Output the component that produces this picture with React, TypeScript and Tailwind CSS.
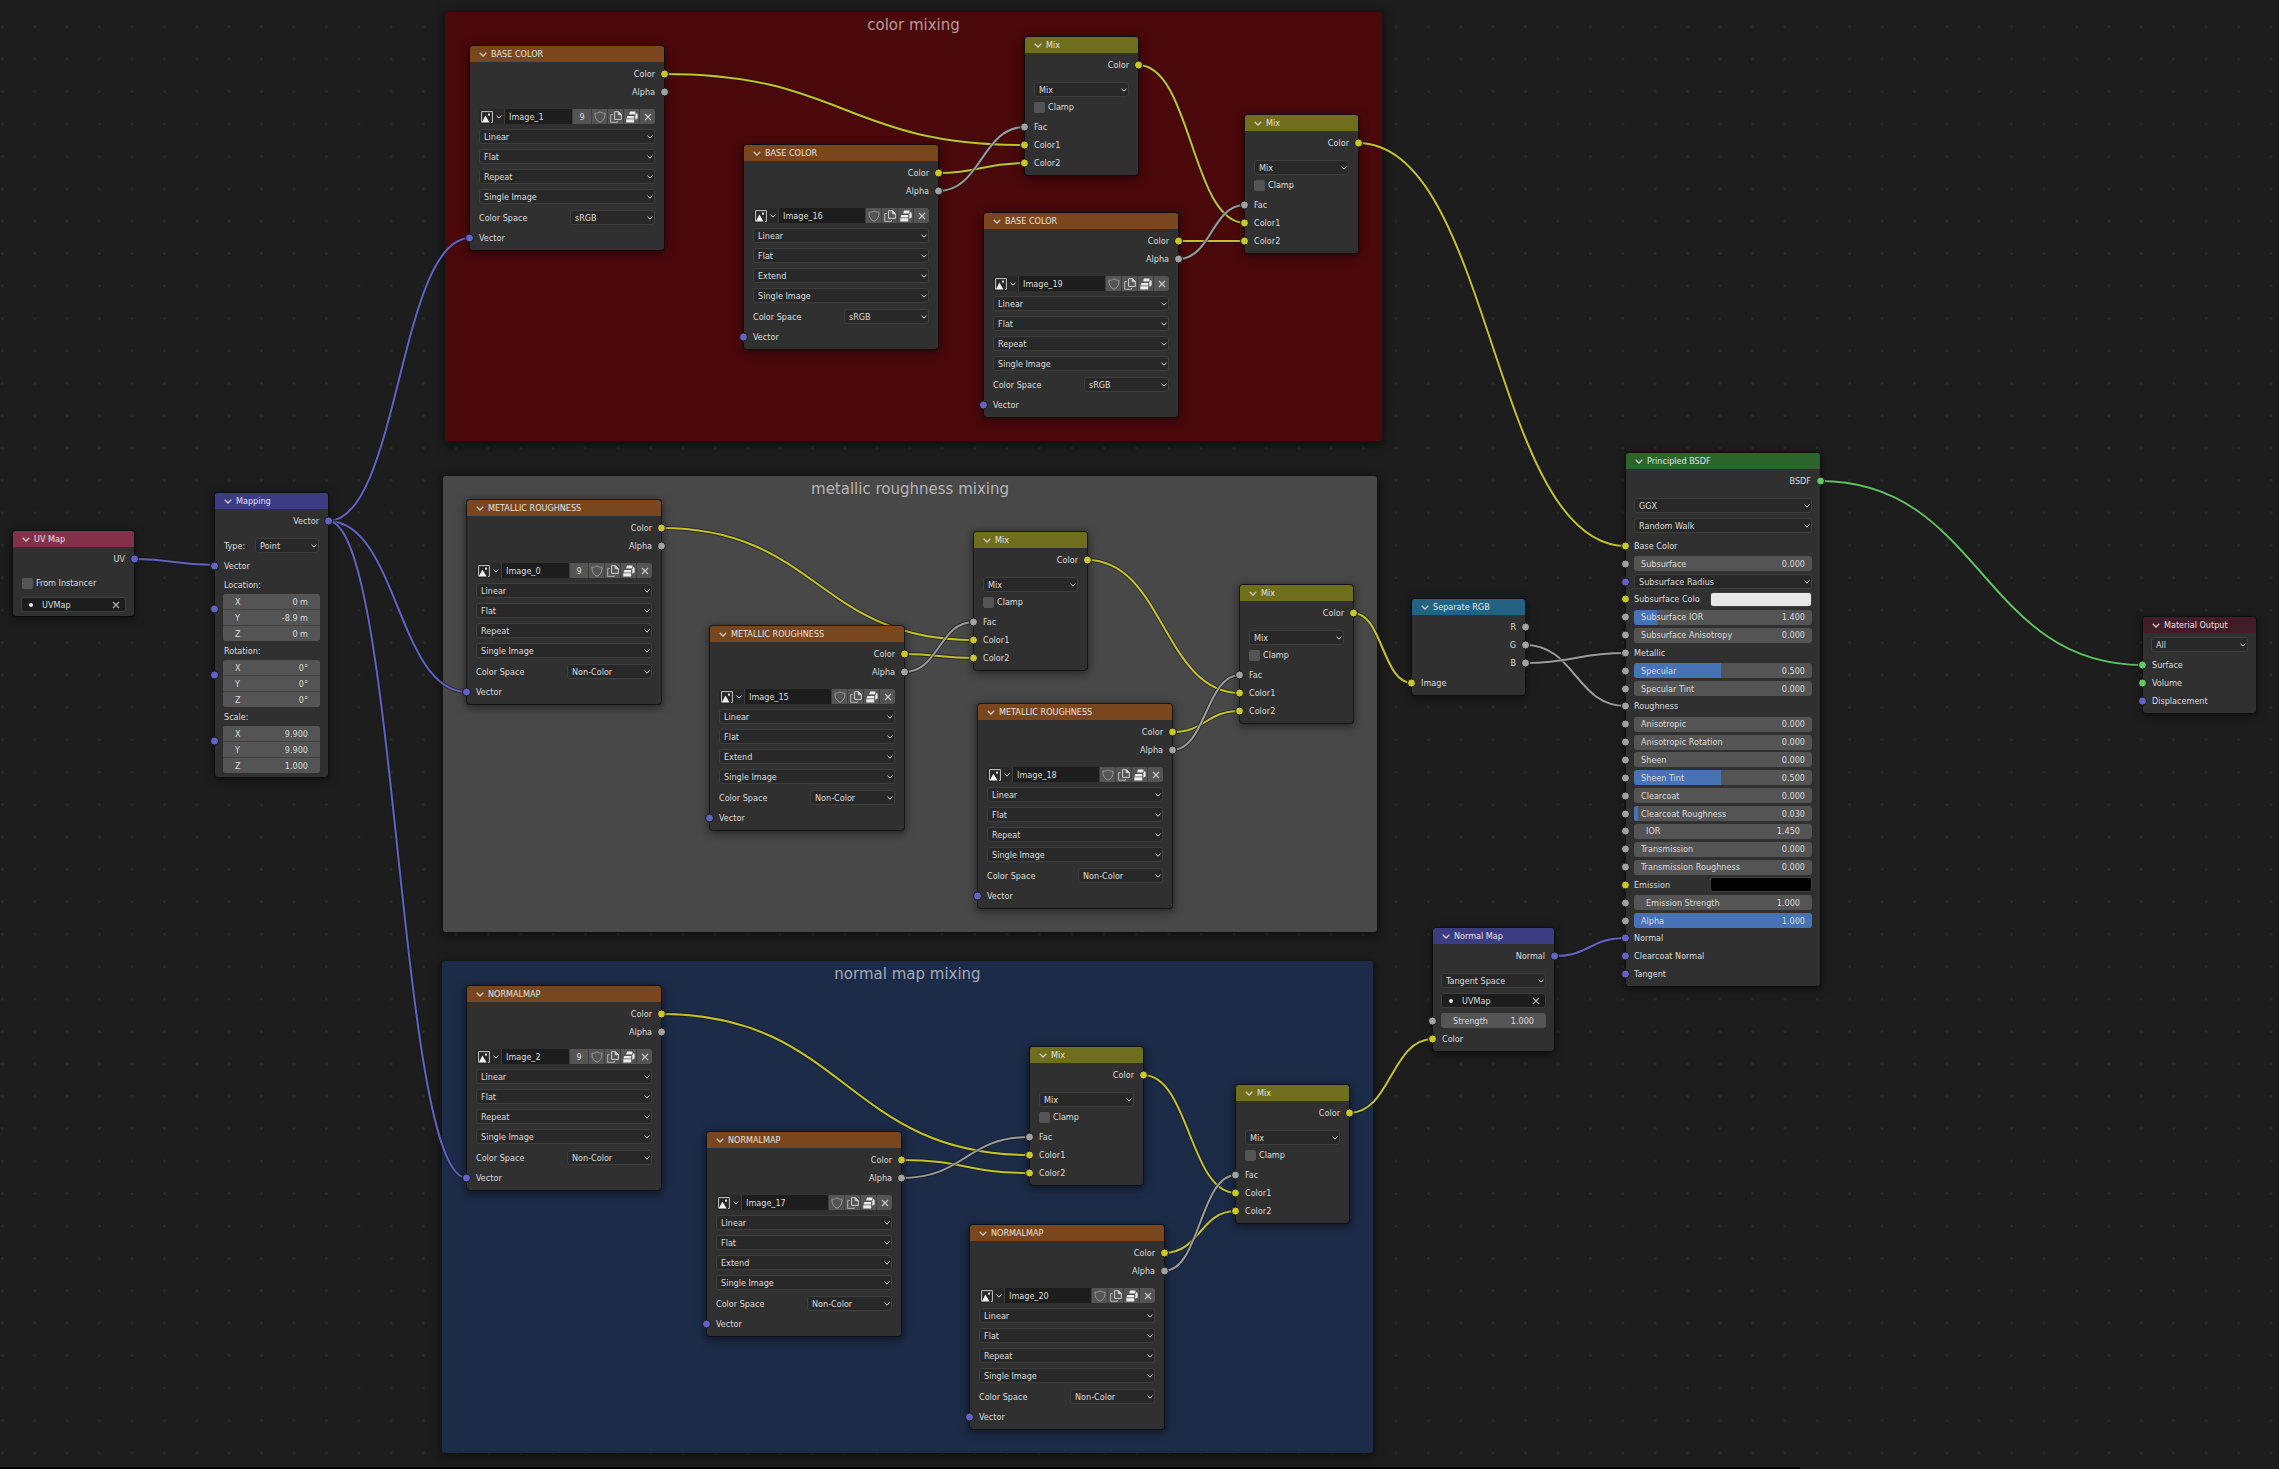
import type { ReactNode } from "react";

type SocketKind = "color" | "value" | "vector" | "shader";

const socketFill: Record<SocketKind, string> = {
  color: "bg-[#c7c729]",
  value: "bg-[#a1a1a1]",
  vector: "bg-[#6363c7]",
  shader: "bg-[#63c763]",
};

const linkStroke: Record<SocketKind, string> = {
  color: "#c3c328",
  value: "#9c9c9c",
  vector: "#6262c6",
  shader: "#5fc25f",
};

interface LinkData {
  kind: SocketKind;
  from: [number, number];
  to: [number, number];
}

const links: LinkData[] = [
  { kind: "vector", from: [134, 559], to: [215, 565] },
  { kind: "vector", from: [328, 521], to: [470, 238] },
  { kind: "vector", from: [328, 521], to: [467, 692] },
  { kind: "vector", from: [328, 521], to: [467, 1178] },
  // color mixing
  { kind: "color", from: [664, 74], to: [1025, 145] },
  { kind: "color", from: [938, 173], to: [1025, 163] },
  { kind: "value", from: [938, 191], to: [1025, 127] },
  { kind: "color", from: [1138, 65], to: [1245, 223] },
  { kind: "color", from: [1178, 241], to: [1245, 241] },
  { kind: "value", from: [1178, 259], to: [1245, 205] },
  { kind: "color", from: [1358, 143], to: [1626, 546] },
  // metallic roughness mixing
  { kind: "color", from: [661, 528], to: [974, 640] },
  { kind: "color", from: [904, 654], to: [974, 658] },
  { kind: "value", from: [904, 672], to: [974, 622] },
  { kind: "color", from: [1087, 560], to: [1240, 693] },
  { kind: "color", from: [1172, 732], to: [1240, 711] },
  { kind: "value", from: [1172, 750], to: [1240, 675] },
  { kind: "color", from: [1353, 613], to: [1412, 683] },
  { kind: "value", from: [1525, 645], to: [1626, 706] },
  { kind: "value", from: [1525, 663], to: [1626, 653] },
  // normal map mixing
  { kind: "color", from: [661, 1014], to: [1030, 1155] },
  { kind: "color", from: [901, 1160], to: [1030, 1173] },
  { kind: "value", from: [901, 1178], to: [1030, 1137] },
  { kind: "color", from: [1143, 1075], to: [1236, 1193] },
  { kind: "color", from: [1164, 1253], to: [1236, 1211] },
  { kind: "value", from: [1164, 1271], to: [1236, 1175] },
  { kind: "color", from: [1349, 1113], to: [1433, 1039] },
  { kind: "vector", from: [1554, 956], to: [1626, 938] },
  { kind: "shader", from: [1820, 481], to: [2143, 665] },
];

/* ---------- icons ---------- */

const Chevron = ({ className }: { className: string }) => (
  <svg viewBox="0 0 8 5" className={className} fill="none" stroke="currentColor" strokeWidth="1.3">
    <path d="M0.7 0.8 L4 4 L7.3 0.8" />
  </svg>
);

const Cross = ({ className }: { className: string }) => (
  <svg viewBox="0 0 8 8" className={className} fill="none" stroke="currentColor" strokeWidth="1.2">
    <path d="M1 1 L7 7 M7 1 L1 7" />
  </svg>
);

const ImageIcon = () => (
  <svg viewBox="0 0 12 12" className="size-3">
    <path d="M0.6 11.4 V0.6 H11.4 V11.4 H10" fill="none" stroke="#c8c8c8" strokeWidth="1" />
    <path d="M0.8 11.6 L4.4 4.6 L8.6 11.6 Z" fill="#f0f0f0" />
    <rect x="7" y="2.6" width="2" height="2" fill="#e8e8e8" />
  </svg>
);

const ShieldIcon = () => (
  <svg viewBox="0 0 12 12" className="size-3" fill="none" stroke="#979797" strokeWidth="1">
    <path d="M6 0.8 C4.6 1.9 2.8 2.3 0.9 2.2 C0.9 6.8 2.4 9.6 6 11.3 C9.6 9.6 11.1 6.8 11.1 2.2 C9.2 2.3 7.4 1.9 6 0.8 Z" />
  </svg>
);

const CopyIcon = () => (
  <svg viewBox="0 0 12 12" className="size-3" fill="none" stroke="#cfcfcf" strokeWidth="1">
    <path d="M4.6 0.7 H8.6 L11.3 3.4 V8.4 H4.6 Z" />
    <path d="M8.3 0.7 V3.7 H11.3 Z" fill="#e6e6e6" />
    <path d="M2.8 3.6 H0.7 V11.3 H7.4 V10" stroke="#b4b4b4" />
  </svg>
);

const PackIcon = () => (
  <svg viewBox="0 0 12 12" className="size-3" fill="#ececec">
    <path d="M4 0.6 H9.4 V3.2 H3.2 Z" />
    <path d="M10.1 2 L11.6 3 V7.4 L9.3 8.8 V4.1 H3.4 V3.8 H10.1 Z" />
    <path d="M1.4 4.9 H8.2 V7.6 H0.4 Z" />
    <path d="M0.3 8.2 H8.2 V11.4 H0.3 Z" />
  </svg>
);

/* ---------- node parts ---------- */

interface NodeProps {
  title: string;
  x: number;
  y: number;
  width: string;
  header: string;
  body?: string;
  children: ReactNode;
}

const Node = ({ title, x, y, width, header, body = "pt-[3px] pb-[3px]", children }: NodeProps) => (
  <section
    className={`absolute rounded-[3px] bg-[#303030] shadow-[0_0_0_1px_rgba(12,12,12,0.75),0_2px_9px_2px_rgba(0,0,0,0.45)] ${width}`}
    style={{ left: x, top: y }}
  >
    <header className={`flex h-4 items-center gap-1 rounded-t-[3px] pl-[9px] ${header}`}>
      <button aria-label={`Collapse ${title}`} className="block text-[#d0c8c0]">
        <Chevron className="h-[5px] w-2" />
      </button>
      <h2 className="whitespace-nowrap text-[#e2e2e2]">{title}</h2>
    </header>
    <div className={`flex flex-col ${body}`}>{children}</div>
  </section>
);

const Socket = ({ kind, side }: { kind: SocketKind; side: "in" | "out" }) => (
  <i
    className={`absolute top-1/2 size-[9px] -translate-y-1/2 rounded-full border border-[#1a1a1a] ${
      side === "in" ? "-left-[5px]" : "-right-[5px]"
    } ${socketFill[kind]}`}
  />
);

const Output = ({ label, kind }: { label: string; kind: SocketKind }) => (
  <div className="relative flex h-[18px] items-center justify-end px-[9px]">
    {label}
    <Socket kind={kind} side="out" />
  </div>
);

const Input = ({ label, kind }: { label: string; kind: SocketKind }) => (
  <div className="relative flex h-[18px] items-center px-[9px]">
    {label}
    <Socket kind={kind} side="in" />
  </div>
);

const Select = ({ value, label, size = "w-full" }: { value: string; label: string; size?: string }) => (
  <div className={`relative h-[15px] ${size}`}>
    <select
      aria-label={label}
      className="block size-full appearance-none rounded-[3px] border border-[#3e3e3e] bg-[#282828] pl-1 text-[#dcdcdc] outline-none"
    >
      <option>{value}</option>
    </select>
    <Chevron className="pointer-events-none absolute top-1/2 right-[2px] h-[4px] w-[6px] -translate-y-1/2 text-[#e0e0e0]" />
  </div>
);

const Check = ({ label }: { label: string }) => (
  <label className="flex h-5 items-center gap-[3px] px-[9px]">
    <input type="checkbox" className="size-[11px] appearance-none rounded-[2px] bg-[#545454] checked:bg-[#4772b3]" />
    {label}
  </label>
);

const UVField = () => (
  <div className="flex h-[15px] items-center rounded-[3px] border border-[#3e3e3e] bg-[#1d1d1d] px-[5px]">
    <i className="mx-[2px] size-[4px] rounded-full bg-[#e6e6e6]" />
    <input aria-label="UV map" defaultValue="UVMap" className="ml-[7px] min-w-0 flex-1 bg-transparent outline-none" />
    <button aria-label="Clear UV map" className="text-[#b0b0b0]">
      <Cross className="size-2" />
    </button>
  </div>
);

const NumberField = ({ label, value, size }: { label: string; value: string; size: string }) => (
  <label className={`flex h-[15px] items-center bg-[#545454] px-3 ${size}`}>
    <span className="whitespace-nowrap">{label}</span>
    <input defaultValue={value} className="w-0 min-w-0 flex-1 bg-transparent text-right outline-none" />
  </label>
);

/* ---------- node types ---------- */

interface ImageNodeProps {
  title: string;
  image: string;
  users?: number;
  extension: string;
  space: string;
  x: number;
  y: number;
}

const ImageNode = ({ title, image, users, extension, space, x, y }: ImageNodeProps) => (
  <Node title={title} x={x} y={y} width="w-[194px]" header="bg-[#79461d]">
    <Output label="Color" kind="color" />
    <Output label="Alpha" kind="value" />
    <div className="mt-2 flex flex-col gap-[5px] px-[9px]">
      <div className="flex h-[15px] gap-px overflow-hidden rounded-[3px] bg-[#3e3e3e]">
        <button aria-label="Browse images" className="flex w-[25px] items-center justify-center gap-[3px] bg-[#282828] text-[#e0e0e0]">
          <ImageIcon />
          <Chevron className="h-[4px] w-[6px]" />
        </button>
        <input aria-label="Image name" defaultValue={image} className="w-0 min-w-0 flex-1 bg-[#1d1d1d] pl-1 outline-none" />
        {users && <button className="w-[18px] bg-[#545454]">{users}</button>}
        <button aria-label="Fake user" className="flex w-[15px] items-center justify-center bg-[#545454]">
          <ShieldIcon />
        </button>
        <button aria-label="New image" className="flex w-[15px] items-center justify-center bg-[#545454]">
          <CopyIcon />
        </button>
        <button aria-label="Unpack" className="flex w-[15px] items-center justify-center bg-[#545454]">
          <PackIcon />
        </button>
        <button aria-label="Unlink" className="flex w-[15px] items-center justify-center bg-[#545454] text-[#c8c8c8]">
          <Cross className="size-2" />
        </button>
      </div>
      <Select label="Interpolation" value="Linear" />
      <Select label="Projection" value="Flat" />
      <Select label="Extension" value={extension} />
      <Select label="Source" value="Single Image" />
      <div className="mt-px flex h-[15px] items-center justify-between">
        Color Space
        <Select label="Color Space" value={space} size="w-[85px]" />
      </div>
    </div>
    <div className="mt-1">
      <Input label="Vector" kind="vector" />
    </div>
  </Node>
);

const MixNode = ({ x, y }: { x: number; y: number }) => (
  <Node title="Mix" x={x} y={y} width="w-[113px]" header="bg-[#6e6e1d]">
    <Output label="Color" kind="color" />
    <div className="mt-2 px-[9px]">
      <Select label="Blend mode" value="Mix" />
    </div>
    <Check label="Clamp" />
    <div className="mt-px">
      <Input label="Fac" kind="value" />
      <Input label="Color1" kind="color" />
      <Input label="Color2" kind="color" />
    </div>
  </Node>
);

const vectors = [
  { label: "Location:", values: ["0 m", "-8.9 m", "0 m"] },
  { label: "Rotation:", values: ["0°", "0°", "0°"] },
  { label: "Scale:", values: ["9.900", "9.900", "1.000"] },
];

const MappingNode = () => (
  <Node title="Mapping" x={215} y={493} width="w-[113px]" header="bg-[#3c3c83]" body="pt-[3px] pb-1">
    <Output label="Vector" kind="vector" />
    <div className="mt-2 flex h-[15px] items-center justify-between px-[9px]">
      Type:
      <Select label="Type" value="Point" size="w-16" />
    </div>
    <div className="mt-1">
      <Input label="Vector" kind="vector" />
    </div>
    {vectors.map((v) => (
      <div key={v.label}>
        <div className="flex h-[19px] items-center px-[9px]">{v.label}</div>
        <div className="relative px-2">
          <div className="flex flex-col gap-px overflow-hidden rounded-[3px] bg-[#404040]">
            {["X", "Y", "Z"].map((axis, i) => (
              <NumberField key={axis} label={axis} value={v.values[i]} size="w-full" />
            ))}
          </div>
          <div className="pointer-events-none absolute inset-x-0 top-0 h-[30px]">
            <Socket kind="vector" side="in" />
          </div>
        </div>
      </div>
    ))}
  </Node>
);

interface BsdfRow {
  label: string;
  kind: SocketKind;
  slider?: [string, number];
  number?: string;
  swatch?: string;
  menu?: boolean;
}

const bsdfRows: BsdfRow[] = [
  { label: "Base Color", kind: "color" },
  { label: "Subsurface", kind: "value", slider: ["0.000", 0] },
  { label: "Subsurface Radius", kind: "vector", menu: true },
  { label: "Subsurface Colo", kind: "color", swatch: "#e7e7e7" },
  { label: "Subsurface IOR", kind: "value", slider: ["1.400", 13] },
  { label: "Subsurface Anisotropy", kind: "value", slider: ["0.000", 0] },
  { label: "Metallic", kind: "value" },
  { label: "Specular", kind: "value", slider: ["0.500", 49] },
  { label: "Specular Tint", kind: "value", slider: ["0.000", 0] },
  { label: "Roughness", kind: "value" },
  { label: "Anisotropic", kind: "value", slider: ["0.000", 0] },
  { label: "Anisotropic Rotation", kind: "value", slider: ["0.000", 0] },
  { label: "Sheen", kind: "value", slider: ["0.000", 0] },
  { label: "Sheen Tint", kind: "value", slider: ["0.500", 49] },
  { label: "Clearcoat", kind: "value", slider: ["0.000", 0] },
  { label: "Clearcoat Roughness", kind: "value", slider: ["0.030", 2] },
  { label: "IOR", kind: "value", number: "1.450" },
  { label: "Transmission", kind: "value", slider: ["0.000", 0] },
  { label: "Transmission Roughness", kind: "value", slider: ["0.000", 0] },
  { label: "Emission", kind: "color", swatch: "#000000" },
  { label: "Emission Strength", kind: "value", number: "1.000" },
  { label: "Alpha", kind: "value", slider: ["1.000", 100] },
  { label: "Normal", kind: "vector" },
  { label: "Clearcoat Normal", kind: "vector" },
  { label: "Tangent", kind: "vector" },
];

const Slider = ({ label, value, percent }: { label: string; value: string; percent: number }) => (
  <label className="relative flex h-[15px] w-full items-center justify-between overflow-hidden rounded-[3px] bg-[#545454] px-[7px]">
    <span className="absolute inset-y-0 left-0 bg-[#4772b3]" style={{ width: `${percent}%` }} />
    <span className="relative whitespace-nowrap">{label}</span>
    <span className="relative">{value}</span>
    <input type="range" defaultValue={percent} className="absolute inset-0 m-0 size-full cursor-ew-resize opacity-0" />
  </label>
);

const BsdfControl = ({ row }: { row: BsdfRow }) => {
  if (row.slider) return <Slider label={row.label} value={row.slider[0]} percent={row.slider[1]} />;
  if (row.number) return <NumberField label={row.label} value={row.number} size="w-full rounded-[3px]" />;
  if (row.menu) return <Select label={row.label} value={row.label} />;
  if (row.swatch)
    return (
      <label className="flex w-full items-center justify-between">
        {row.label}
        <input
          type="color"
          defaultValue={row.swatch}
          className="h-[15px] w-[102px] appearance-none overflow-hidden rounded-[3px] border border-[#3e3e3e] p-0 [&::-webkit-color-swatch]:border-0 [&::-webkit-color-swatch-wrapper]:p-0"
        />
      </label>
    );
  return <span>{row.label}</span>;
};

const PrincipledNode = () => (
  <Node title="Principled BSDF" x={1626} y={453} width="w-[194px]" header="bg-[#2b652b]">
    <Output label="BSDF" kind="shader" />
    <div className="mt-2 flex flex-col gap-[5px] px-2">
      <Select label="Distribution" value="GGX" />
      <Select label="Subsurface method" value="Random Walk" />
    </div>
    <div className="mt-1 grid h-[446px] auto-rows-fr">
      {bsdfRows.map((row) => (
        <div key={row.label} className="relative flex min-h-0 items-center px-2">
          <BsdfControl row={row} />
          <Socket kind={row.kind} side="in" />
        </div>
      ))}
    </div>
  </Node>
);

interface FrameProps {
  title: string;
  box: string;
}

const Frame = ({ title, box }: FrameProps) => (
  <div className={`absolute rounded-[3px] pt-1 text-center shadow-[0_2px_9px_3px_rgba(0,0,0,0.4)] ${box}`}>
    <h1 className="font-['DejaVu_Sans',sans-serif] text-[15px] leading-[18px] text-white/60">{title}</h1>
  </div>
);

export default function App() {
  return (
    <main className="flex min-h-screen w-full flex-col bg-[#1d1d1d] font-['DejaVu_Sans_Condensed','DejaVu_Sans',sans-serif] text-[9px] leading-3 text-[#dcdcdc]">
      <div className="relative flex-1 overflow-hidden">
        <svg className="absolute inset-0 size-full">
          <defs>
            <pattern id="dots" x="-13.9" y="10.5" width="32.41" height="32.41" patternUnits="userSpaceOnUse">
              <circle cx="16.2" cy="16.2" r="1.5" fill="#2b2b2b" />
            </pattern>
          </defs>
          <rect width="100%" height="100%" fill="url(#dots)" />
        </svg>

        <Frame title="color mixing" box="left-[445px] top-[12px] h-[429px] w-[937px] bg-[#4b080b]" />
        <Frame title="metallic roughness mixing" box="left-[443px] top-[476px] h-[456px] w-[934px] bg-[#484848]" />
        <Frame title="normal map mixing" box="left-[442px] top-[961px] h-[492px] w-[931px] bg-[#1c2b48]" />

        <svg className="absolute inset-0 size-full" fill="none">
          {links.map(({ kind, from, to }) => {
            const mid = (from[0] + to[0]) / 2;
            const d = `M${from[0]} ${from[1]} C${mid} ${from[1]} ${mid} ${to[1]} ${to[0]} ${to[1]}`;
            return (
              <g key={d}>
                <path d={d} stroke="#151515" strokeOpacity="0.6" strokeWidth="3.8" />
                <path d={d} stroke={linkStroke[kind]} strokeWidth="2" />
              </g>
            );
          })}
        </svg>

        <Node title="UV Map" x={13} y={531} width="w-[121px]" header="bg-[#83314a]" body="pt-[3px] pb-1">
          <Output label="UV" kind="vector" />
          <div className="mt-[5px]">
            <Check label="From Instancer" />
          </div>
          <div className="mt-1 px-2">
            <UVField />
          </div>
        </Node>
        <MappingNode />

        <ImageNode title="BASE COLOR" image="Image_1" users={9} extension="Repeat" space="sRGB" x={470} y={46} />
        <ImageNode title="BASE COLOR" image="Image_16" extension="Extend" space="sRGB" x={744} y={145} />
        <ImageNode title="BASE COLOR" image="Image_19" extension="Repeat" space="sRGB" x={984} y={213} />
        <MixNode x={1025} y={37} />
        <MixNode x={1245} y={115} />

        <ImageNode title="METALLIC ROUGHNESS" image="Image_0" users={9} extension="Repeat" space="Non-Color" x={467} y={500} />
        <ImageNode title="METALLIC ROUGHNESS" image="Image_15" extension="Extend" space="Non-Color" x={710} y={626} />
        <ImageNode title="METALLIC ROUGHNESS" image="Image_18" extension="Repeat" space="Non-Color" x={978} y={704} />
        <MixNode x={974} y={532} />
        <MixNode x={1240} y={585} />

        <ImageNode title="NORMALMAP" image="Image_2" users={9} extension="Repeat" space="Non-Color" x={467} y={986} />
        <ImageNode title="NORMALMAP" image="Image_17" extension="Extend" space="Non-Color" x={707} y={1132} />
        <ImageNode title="NORMALMAP" image="Image_20" extension="Repeat" space="Non-Color" x={970} y={1225} />
        <MixNode x={1030} y={1047} />
        <MixNode x={1236} y={1085} />

        <Node title="Separate RGB" x={1412} y={599} width="w-[113px]" header="bg-[#246283]">
          <Output label="R" kind="value" />
          <Output label="G" kind="value" />
          <Output label="B" kind="value" />
          <div className="mt-0.5">
            <Input label="Image" kind="color" />
          </div>
        </Node>

        <Node title="Normal Map" x={1433} y={928} width="w-[121px]" header="bg-[#3c3c83]">
          <Output label="Normal" kind="vector" />
          <div className="mt-2 flex flex-col gap-[5px] px-2">
            <Select label="Space" value="Tangent Space" />
            <UVField />
          </div>
          <div className="relative mt-[5px] px-2">
            <NumberField label="Strength" value="1.000" size="w-full rounded-[3px]" />
            <Socket kind="value" side="in" />
          </div>
          <div className="mt-0.5">
            <Input label="Color" kind="color" />
          </div>
        </Node>

        <PrincipledNode />

        <Node title="Material Output" x={2143} y={617} width="w-[113px]" header="bg-[#411d29]">
          <div className="mt-px px-2">
            <Select label="Target" value="All" />
          </div>
          <div className="mt-1">
            <Input label="Surface" kind="shader" />
            <Input label="Volume" kind="shader" />
            <Input label="Displacement" kind="vector" />
          </div>
        </Node>
      </div>
      <div className="h-0.5 w-[79%] bg-black" />
    </main>
  );
}
